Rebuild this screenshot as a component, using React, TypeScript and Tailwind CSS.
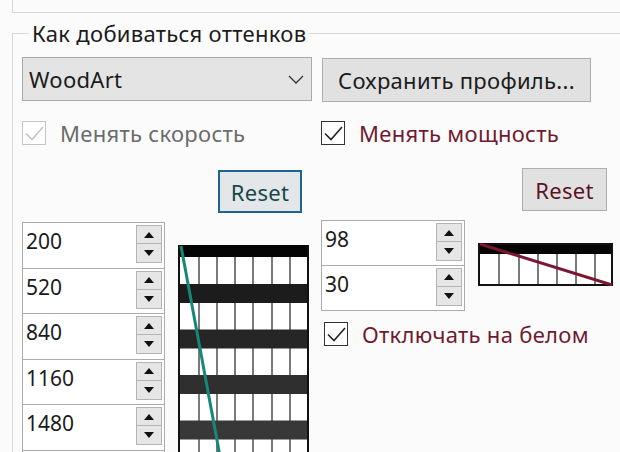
import React from 'react'

const SPEEDS = ['200', '520', '840', '1160', '1480', '']
const POWERS = ['98', '30']

function Spinner() {
  return (
    <div className="mt-[2px] flex flex-col w-[26px] shrink-0">
      <div className="h-[19px] border border-[#b4b4b4] bg-[#e6e6e6] flex items-center justify-center">
        <svg width="10" height="6" viewBox="0 0 10 6"><path d="M5 0L10 6H0z" fill="#111" /></svg>
      </div>
      <div className="h-[19px] border border-t-0 border-[#b4b4b4] bg-[#e6e6e6] flex items-center justify-center">
        <svg width="10" height="6" viewBox="0 0 10 6"><path d="M0 0H10L5 6z" fill="#111" /></svg>
      </div>
    </div>
  )
}

function SpinBox({ values, wide }: { values: string[]; wide?: boolean }) {
  return (
    <div className={`${wide ? 'w-[144px]' : 'w-[143px]'} shrink-0 border border-[#acacac] bg-white divide-y divide-[#acacac]`}>
      {values.map((v, i) => (
        <div key={i} className={`${wide ? 'h-[44.5px]' : 'h-[45.6px]'} flex items-start justify-between pl-[3px] pr-[2px]`}>
          <span className="pt-[4px] leading-[28px] text-[21px] tracking-normal">{v}</span>
          <Spinner />
        </div>
      ))}
    </div>
  )
}

function CheckBox({ label, disabled, tone }: { label: string; disabled?: boolean; tone: string }) {
  return (
    <div className="flex items-center gap-[14px] h-[24px]">
      <div className={`w-[24px] h-[24px] shrink-0 bg-white border ${disabled ? 'border-[#c4c4c4]' : 'border-[#333]'}`}>
        <svg width="22" height="22" viewBox="0 0 22 22">
          <path d="M3 11.5L9 17.5L20 5" fill="none" stroke={disabled ? '#c4c4c4' : '#222'} strokeWidth="1.6" />
        </svg>
      </div>
      <span className={`leading-[28px] whitespace-nowrap ${tone}`}>{label}</span>
    </div>
  )
}

function SpeedChart() {
  const bars = [-7, 39, 84.5, 130, 175.5]
  const shades = ['#050505', '#1c1c1c', '#262626', '#2f2f2f', '#383838']
  const grid = [21, 39, 57, 75, 94, 112]
  return (
    <svg width="131" height="220" viewBox="0 0 131 220" className="shrink-0 ml-[13px] mt-[23px]">
      <rect x="0" y="0" width="131" height="220" fill="#fff" />
      {grid.map(x => <line key={x} x1={x} y1="0" x2={x} y2="220" stroke="#333" strokeWidth="1.3" />)}
      {bars.map((y, i) => <rect key={y} x="0" y={y} width="131" height="19" fill={shades[i]} />)}
      <line x1="1" y1="0" x2="1" y2="220" stroke="#111" strokeWidth="2" />
      <line x1="130" y1="0" x2="130" y2="220" stroke="#111" strokeWidth="2" />
      <line x1="3" y1="1" x2="43.6" y2="220" stroke="#17877a" strokeWidth="3" />
    </svg>
  )
}

function PowerChart() {
  const grid = [21, 41, 60, 79, 98, 117]
  return (
    <svg width="135" height="43" viewBox="0 0 135 43" className="shrink-0 ml-[13px] mt-[23px]">
      <rect x="0" y="0" width="135" height="43" fill="#fff" />
      {grid.map(x => <line key={x} x1={x} y1="0" x2={x} y2="43" stroke="#333" strokeWidth="1.3" />)}
      <rect x="0" y="0" width="135" height="11" fill="#050505" />
      <rect x="1" y="1" width="133" height="41" fill="none" stroke="#111" strokeWidth="2" />
      <line x1="2" y1="1" x2="134" y2="42" stroke="#7c1631" strokeWidth="3" />
    </svg>
  )
}

export default function App() {
  return (
    <div className="w-[620px] h-[452px] overflow-hidden bg-[#fbfbfb] text-[22px] tracking-[0.3px] text-[#1b1b1b] font-['Noto_Sans',sans-serif]">
      <div className="ml-[12px] h-[13px] border-l border-b border-[#d7d7d7]" />

      <fieldset className="ml-[12px] mt-[6px] min-w-0 border-l border-t border-[#dadada] pl-[9px] pt-[10px]">
        <legend className="ml-[7px] px-[3px] leading-[28px]">Как добиваться оттенков</legend>

        {/* profile row */}
        <div className="flex items-start gap-[10px]">
          <div className="w-[290px] h-[44px] border border-[#a9a9a9] bg-[#e4e4e4] flex items-center justify-between pl-[6px] pr-[7px]">
            <span className="leading-[28px]">WoodArt</span>
            <svg width="16" height="9" viewBox="0 0 16 9">
              <path d="M1 1L8 8L15 1" fill="none" stroke="#333" strokeWidth="1.3" />
            </svg>
          </div>
          <button className="mt-px w-[269px] h-[44px] border border-[#adadad] bg-[#e1e1e1] leading-[28px] whitespace-nowrap">
            Сохранить профиль...
          </button>
        </div>

        <div className="mt-[19px] flex">
          {/* speed */}
          <div className="w-[299px] flex flex-col shrink-0">
            <CheckBox label="Менять скорость" disabled tone="text-[#6b6b6b]" />
            <button className="mt-[25px] ml-[196px] w-[84px] h-[43px] border-2 border-[#1d6591] bg-[#e3e7ea] text-[#174848] leading-[28px]">
              Reset
            </button>
            <div className="mt-[9px] flex items-start">
              <SpinBox values={SPEEDS} />
              <SpeedChart />
            </div>
          </div>

          {/* power */}
          <div className="flex flex-col">
            <CheckBox label="Менять мощность" tone="text-[#701a30]" />
            <button className="mt-[23px] ml-[201px] w-[85px] h-[43px] border border-[#adadad] bg-[#e1e1e1] text-[#5c1326] leading-[28px]">
              Reset
            </button>
            <div className="mt-[9px] flex items-start">
              <SpinBox values={POWERS} wide />
              <PowerChart />
            </div>
            <div className="mt-[11px] ml-[3px]">
              <CheckBox label="Отключать на белом" tone="text-[#701a30]" />
            </div>
          </div>
        </div>
      </fieldset>
    </div>
  )
}
